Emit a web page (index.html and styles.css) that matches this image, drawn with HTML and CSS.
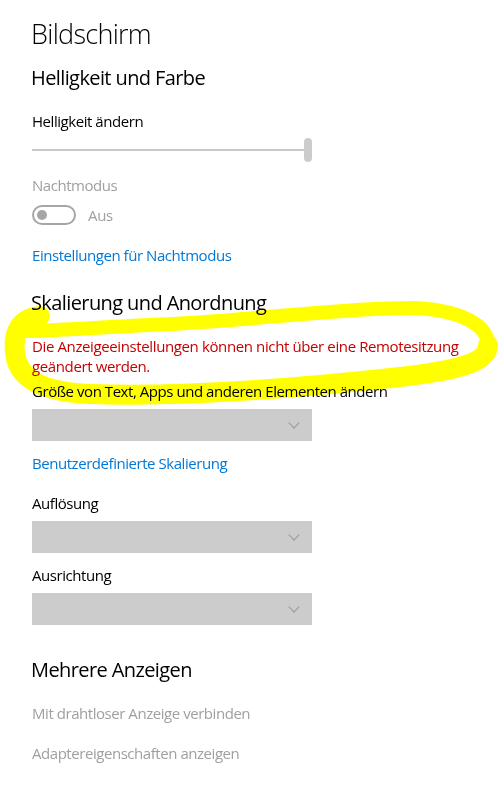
FILE: index.html
```html
<!DOCTYPE html>
<html lang="de">
<head>
  <meta charset="UTF-8" />
  <meta name="viewport" content="width=device-width, initial-scale=1" />
  <title>Bildschirm</title>
  <link rel="stylesheet" href="styles.css">
</head>
<body>
  <div class="page">
    <h1 class="title">Bildschirm</h1>

    <h2 class="section first">Helligkeit und Farbe</h2>
    <div class="label">Helligkeit ändern</div>
    <div class="slider">
      <div class="track"></div>
      <div class="thumb"></div>
    </div>

    <div class="label disabled night">Nachtmodus</div>
    <div class="toggle-row">
      <span class="toggle"><span class="knob"></span></span>
      <span class="toggle-text">Aus</span>
    </div>
    <a class="link night-link" href="#">Einstellungen für Nachtmodus</a>

    <h2 class="section">Skalierung und Anordnung</h2>
    <p class="warning">Die Anzeigeeinstellungen können nicht über eine Remotesitzung geändert werden.</p>
    <div class="label size">Größe von Text, Apps und anderen Elementen ändern</div>
    <div class="dropdown"><span class="chevron"></span></div>
    <a class="link after-drop" href="#">Benutzerdefinierte Skalierung</a>

    <div class="label field">Auflösung</div>
    <div class="dropdown"><span class="chevron"></span></div>
    <div class="label after-drop">Ausrichtung</div>
    <div class="dropdown"><span class="chevron"></span></div>

    <h2 class="section multi">Mehrere Anzeigen</h2>
    <div class="label disabled">Mit drahtloser Anzeige verbinden</div>
    <div class="label disabled adapter">Adaptereigenschaften anzeigen</div>
  </div>

  <!-- hand drawn marker over the screenshot -->
  <svg class="marker" width="502" height="798" viewBox="0 0 502 798">
    <path class="thick" d="M40 316 C20 318 13 332 15 352 C17 378 40 392 90 394 C180 397 300 388 400 377 C460 370 488 362 488 345" />
    <path class="thin" d="M488 345 C488 325 460 309 410 308 C340 308 260 320 150 325 C90 328 50 331 26 331" />
  </svg>
</body>
</html>
```

FILE: styles.css
```css
body {
  margin: 0;
  padding: 0;
  background: #fff;
  color: #000;
  font-family: 'Open Sans', 'Noto Sans', sans-serif;
}
.page {
  padding: 14px 0 0 32px;
  width: 280px;
}
.title {
  margin: 0 0 0 -1px;
  font-size: 27px;
  font-weight: 300;
  line-height: 40px;
  letter-spacing: -0.7px;
}
.section {
  margin: 24px 0 0 -1px;
  font-size: 20px;
  font-weight: 400;
  line-height: 28px;
  letter-spacing: -0.6px;
  white-space: nowrap;
}
.section.first {
  margin-top: 10px;
}
.section.multi {
  margin-top: 31px;
}
.label {
  margin-top: 19px;
  font-size: 15px;
  line-height: 20px;
  letter-spacing: -0.45px;
  white-space: nowrap;
}
.disabled {
  color: #a0a0a0;
}
.label.night {
  margin-top: 13px;
}
.label.size {
  margin-top: 5px;
}
.label.field {
  margin-top: 20px;
}
.label.adapter {
  margin-top: 20px;
}
.slider {
  margin-top: 7px;
  height: 24px;
  display: flex;
  align-items: center;
}
.track {
  flex: 1;
  height: 2px;
  background: #c8c8c8;
}
.thumb {
  width: 8px;
  height: 24px;
  border-radius: 4px;
  background: #cccccc;
}
.toggle-row {
  margin-top: 10px;
  display: flex;
  align-items: center;
  height: 20px;
}
.toggle {
  box-sizing: border-box;
  width: 44px;
  height: 20px;
  border: 2px solid #a6a6a6;
  border-radius: 10px;
  display: flex;
  align-items: center;
  padding-left: 3px;
}
.knob {
  width: 10px;
  height: 10px;
  border-radius: 50%;
  background: #a6a6a6;
}
.toggle-text {
  margin-left: 12px;
  font-size: 15px;
  color: #a0a0a0;
  letter-spacing: -0.3px;
}
.link {
  display: block;
  font-size: 15px;
  line-height: 20px;
  color: #0078d7;
  text-decoration: none;
  letter-spacing: -0.45px;
  white-space: nowrap;
}
.night-link {
  margin-top: 20px;
}
.warning {
  margin: 19px 0 0;
  width: 440px;
  font-size: 15px;
  line-height: 20px;
  color: #c50000;
  letter-spacing: -0.38px;
}
.marker {
  position: absolute;
  left: 0;
  top: 0;
  mix-blend-mode: multiply;
  pointer-events: none;
}
.marker path {
  fill: none;
  stroke: #ffff00;
  stroke-linecap: round;
  stroke-linejoin: round;
}
.marker .thick {
  stroke-width: 20;
}
.marker .thin {
  stroke-width: 14;
}
.dropdown {
  margin-top: 8px;
  height: 32px;
  background: #cccccc;
  display: flex;
  align-items: center;
  justify-content: flex-end;
  padding-right: 14px;
}
.chevron {
  width: 7px;
  height: 7px;
  border-right: 1px solid #999;
  border-bottom: 1px solid #999;
  transform: rotate(45deg);
  margin-top: -5px;
}
.after-drop {
  margin-top: 12px;
}
```
